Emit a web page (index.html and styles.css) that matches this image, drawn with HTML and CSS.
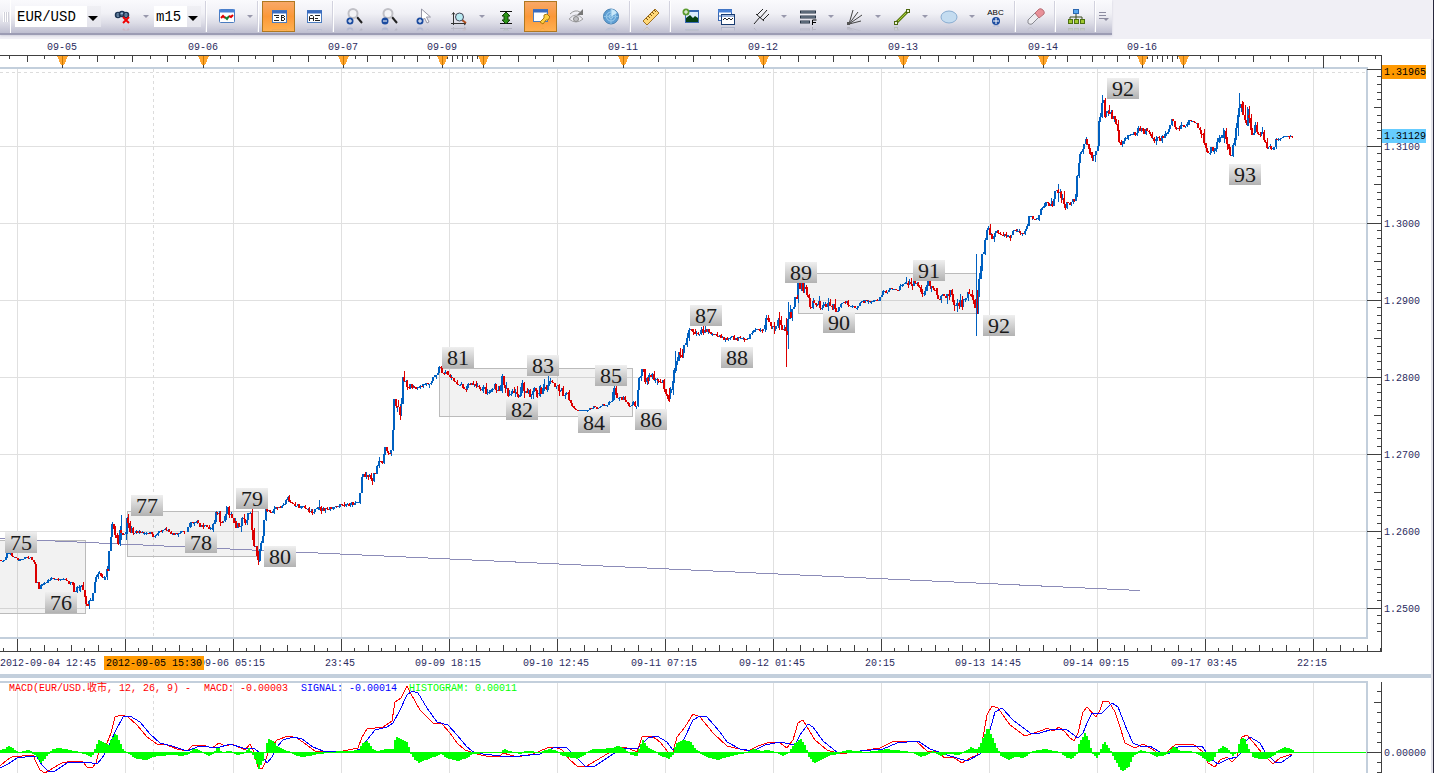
FILE: index.html
```
<!DOCTYPE html>
<html lang="en">
<head>
    <meta charset="UTF-8">
    <meta name="viewport" content="width=device-width, initial-scale=1.0">
    <title>EUR/USD m15</title>
    <link rel="stylesheet" href="styles.css">
</head>
<body>
    <div class="toolbar-row">
        <div class="toolbar">
            <span class="grip"></span>
            <span class="combo symbol">
                <select aria-label="Symbol"><option>EUR/USD</option><option>GBP/USD</option></select>
            </span>
            <button class="tool" aria-label="Unlink chart">
                <svg viewBox="0 0 18 18"><g fill="#9fbfdc" stroke="#1d3554" stroke-width="1.5"><circle cx="4" cy="7" r="2.500"/><circle cx="8" cy="6" r="2.500"/><circle cx="12" cy="7" r="2.500"/></g><path d="M2 7h12" stroke="#1d3554"/><path d="M9 9l6 6M15 9l-6 6" stroke="#f00000" stroke-width="2"/></svg>
            </button>
            <button class="drop" aria-label="Link options"></button>
            <span class="combo period">
                <select aria-label="Period"><option>m15</option><option>H1</option></select>
            </span>
            <span class="sep"></span>
            <button class="tool" aria-label="Chart type">
                <svg viewBox="0 0 18 18"><rect x="1.500" y="1.500" width="15" height="13" rx="1" fill="#fff" stroke="#4a7cc0"/><path d="M1 3h16" stroke="#4a82d6" stroke-width="3"/><path d="M3 10l2-2 2 2" fill="none" stroke="#e00000" stroke-width="2"/><path d="M7 9l2 2 2-3" fill="none" stroke="#108030" stroke-width="2"/><path d="M11 8l2 1 2-2" fill="none" stroke="#e00000" stroke-width="2"/></svg>
            </button>
            <button class="drop" aria-label="More chart types"></button>
            <span class="sep"></span>
            <button class="tool active" aria-label="Bid price">
                <svg viewBox="0 0 18 18"><rect x="2.500" y="2.500" width="14" height="12" fill="#fff" stroke="#4a7cc0"/><path d="M2 4h15" stroke="#3a6cc0" stroke-width="3"/><path d="M4 7.500h5M6 9.500h3M4 12.500h5M11.500 7v6M11 7.500h3M11 9.500h3M11 12.500h3M14.500 8v1M14.500 10v2" fill="none" stroke="#222"/></svg>
            </button>
            <button class="tool" aria-label="Ask price">
                <svg viewBox="0 0 18 18"><rect x="2.500" y="2.500" width="14" height="12" fill="#fff" stroke="#4a7cc0"/><path d="M2 4h15" stroke="#3a6cc0" stroke-width="3"/><path d="M4.500 13V8.500l1-1h2l1 1V13M5 10.500h4M10 7.500h5M10 10.500h3M10 12.500h5" fill="none" stroke="#222"/></svg>
            </button>
            <span class="sep"></span>
            <button class="tool" aria-label="Zoom in">
                <svg viewBox="0 0 18 18"><path d="M12 9l5 6" stroke="#222" stroke-width="2"/><circle cx="8" cy="5.500" r="4.500" fill="#f4f4f6" stroke="#c0c0c6" stroke-width="2"/><circle cx="5" cy="13" r="3.500" fill="#1c4ca0"/><path d="M3 13h4M5 11v4" stroke="#fff"/></svg>
            </button>
            <button class="tool" aria-label="Zoom out">
                <svg viewBox="0 0 18 18"><path d="M12 9l5 6" stroke="#222" stroke-width="2"/><circle cx="8" cy="5.500" r="4.500" fill="#f4f4f6" stroke="#c0c0c6" stroke-width="2"/><circle cx="5" cy="13" r="3.500" fill="#1c4ca0"/><path d="M3 13h4" stroke="#fff"/></svg>
            </button>
            <button class="tool" aria-label="Zoom to selection">
                <svg viewBox="0 0 18 18"><path d="M6.500 1v12l3-3 2.500 5 2-1-2.500-5h4z" fill="#fff" stroke="#9696a4"/><circle cx="5" cy="13" r="3.500" fill="#1c4ca0"/><path d="M3 13h4M5 11v4" stroke="#fff"/></svg>
            </button>
            <button class="tool" aria-label="Fit price axis">
                <svg viewBox="0 0 18 18"><path d="M3.500 5v12M1 15.500h15M2 6.500l1.500-2 1.500 2M14 14l2 1.500-2 1.500" fill="none" stroke="#333"/><path d="M12 12l4 3" stroke="#b05020" stroke-width="2"/><circle cx="9.500" cy="9" r="4" fill="#b8eaf2" stroke="#445"/></svg>
            </button>
            <button class="drop" aria-label="Fit options"></button>
            <button class="tool" aria-label="Fit vertically">
                <svg viewBox="0 0 18 18"><path d="M3 3.500h12M3 15.500h12" stroke="#111"/><path d="M9 4l4 4h-2v4h2l-4 4-4-4h2V8H5z" fill="#2c9418" stroke="#124008"/></svg>
            </button>
            <button class="tool active" aria-label="Chart options">
                <svg viewBox="0 0 18 18"><rect x="1.500" y="1.500" width="14" height="12" fill="#fff" stroke="#4a7cc0"/><path d="M1 3h15" stroke="#3a6cc0" stroke-width="3"/><path d="M8 14l4-4V7l3-1 3 3-2 3h-2l-3 4z" fill="#ffcf40" stroke="#a87810"/></svg>
            </button>
            <button class="tool" aria-label="Refresh view">
                <svg viewBox="0 0 18 18"><path d="M2 11q7-8 14 0q-7 6-14 0z" fill="#ececf0" stroke="#a0a0a4"/><circle cx="9" cy="11" r="2.500" fill="#c0c0c4" stroke="#888"/><path d="M3 6q5-5 10-2" fill="none" stroke="#999"/><path d="M16 1v6h-6z" fill="#777"/></svg>
            </button>
            <button class="tool" aria-label="Market radar">
                <svg viewBox="0 0 18 18"><circle cx="9" cy="8.500" r="7.500" fill="#5f9fd4" stroke="#4880b0"/><circle cx="9" cy="8.500" r="4.500" fill="none" stroke="#a8d4f0"/><circle cx="9" cy="8.500" r="2" fill="none" stroke="#a8d4f0"/><path d="M9 8.500V1a7.500 7.500 0 0 1 6 4z" fill="#c8e8fa"/><path d="M2 8.500h14M9 1v15" stroke="#8cc0e4"/></svg>
            </button>
            <span class="sep"></span>
            <button class="tool" aria-label="Ruler">
                <svg viewBox="0 0 18 18"><path d="M1 13L13 1l4 4L5 17z" fill="#ffd878" stroke="#a07020"/><path d="M4 10l2 2M6 8l2 2M8 6l2 2M10 4l2 2M12 2l2 2" stroke="#7c5410"/></svg>
            </button>
            <span class="sep"></span>
            <button class="tool" aria-label="Add indicator">
                <svg viewBox="0 0 18 18"><rect x="3.500" y="2.500" width="13" height="12" fill="#dcecff" stroke="#3868b4"/><path d="M3 3h14" stroke="#3868b4" stroke-width="2"/><path d="M4 14v-4l4-3 3 3 2-2 3 2v4z" fill="#064014"/><circle cx="4" cy="4" r="3.500" fill="#5c9c30"/><path d="M2 4h4M4 2v4" stroke="#fff"/></svg>
            </button>
            <button class="tool" aria-label="Indicator windows">
                <svg viewBox="0 0 18 18"><rect x="1.500" y="1.500" width="13" height="11" fill="#fff" stroke="#3868b4"/><path d="M1 3h14" stroke="#4a82d6" stroke-width="3"/><rect x="4.500" y="6.500" width="13" height="10" fill="#fff" stroke="#183c70"/><path d="M1 8h16" stroke="#3868b4"/><path d="M6 12l2-2 2 2 2-2 2 2 2-2" fill="none" stroke="#222"/></svg>
            </button>
            <button class="tool" aria-label="Pitchfork">
                <svg viewBox="0 0 18 18"><path d="M2 16L8 9M4 6l8 7M5 7l6-6M8 10l7-8M11 12l6-6" fill="none" stroke="#222"/></svg>
            </button>
            <button class="drop" aria-label="More pitchforks"></button>
            <button class="tool" aria-label="Fibonacci">
                <svg viewBox="0 0 18 18"><path d="M1 4h16M1 9h16M1 14h10" stroke="#283444" stroke-width="3"/><path d="M2 4h14M2 9h14M2 14h8" stroke="#8c9cac"/><path d="M13.500 17v-5h4M13 14.500h4" fill="none" stroke="#000"/></svg>
            </button>
            <button class="drop" aria-label="More levels"></button>
            <button class="tool" aria-label="Fan lines">
                <svg viewBox="0 0 18 18"><path d="M3 16L7 2M3 16l9-12M3 16l13-9M3 16l12-3" stroke="#444"/><rect x="1" y="14" width="3" height="3" fill="#555"/></svg>
            </button>
            <button class="drop" aria-label="More fans"></button>
            <button class="tool" aria-label="Line">
                <svg viewBox="0 0 18 18"><path d="M3 15L15 3" stroke="#5c7c10" stroke-width="3"/><path d="M3 15L15 3" stroke="#a8d038"/><rect x="1.500" y="13.500" width="3" height="3" fill="#eef4d8" stroke="#4c6810"/><rect x="13.500" y="1.500" width="3" height="3" fill="#eef4d8" stroke="#4c6810"/></svg>
            </button>
            <button class="drop" aria-label="More lines"></button>
            <button class="tool" aria-label="Ellipse">
                <svg viewBox="0 0 18 18"><ellipse cx="9" cy="9" rx="8" ry="6" fill="#c4dcf0" stroke="#88acd0"/></svg>
            </button>
            <button class="drop" aria-label="More shapes"></button>
            <button class="tool caption" aria-label="Text label">
                <span>ABC</span>
                <svg viewBox="0 0 8 8"><circle cx="4" cy="4" r="4" fill="#1c4ca0"/><path d="M1 4h6M4 1v6" stroke="#fff"/></svg>
            </button>
            <span class="sep"></span>
            <button class="tool" aria-label="Eraser">
                <svg viewBox="0 0 18 18"><path d="M1 12l7-7 4 4-7 7q-2 1-4-1z" fill="#ececf0" stroke="#888890"/><path d="M8 5l4-4q2-1 4 1t1 4l-5 4z" fill="#e89098" stroke="#b87078"/></svg>
            </button>
            <span class="sep"></span>
            <button class="tool" aria-label="Object tree">
                <svg viewBox="0 0 18 18"><path d="M9 6v6M3 12V9h12v3" fill="none" stroke="#3c4c20"/><rect x="6.500" y="1.500" width="5" height="4" fill="#58a8f0" stroke="#2c68b0"/><g fill="#a0c830" stroke="#4c7010"><rect x="1.500" y="11.500" width="4" height="4"/><rect x="7.500" y="11.500" width="4" height="4"/><rect x="13.500" y="11.500" width="4" height="4"/></g></svg>
            </button>
            <span class="sep"></span>
            <button class="overflow" aria-label="Toolbar options">
                <svg viewBox="0 0 10 10"><path d="M0 .5h7M0 3.500h7M0 6.500h5" stroke="#8c8ca0"/><path d="M4 6h6l-3 3z" fill="#8c8ca0"/></svg>
            </button>
        </div>
    </div>

    <main class="workspace">
        <svg id="price" class="chart" viewBox="0 39 1431 635" role="img" aria-label="EUR/USD 15 minute price chart">
            <defs>
                <linearGradient id="tagFill" x1="0" y1="0" x2="0" y2="1">
                    <stop offset="0" stop-color="#efefef"/>
                    <stop offset="1" stop-color="#b2b2b2"/>
                </linearGradient>
            </defs>
        </svg>
        <div class="splitter"></div>
        <svg id="macd" class="chart" viewBox="0 678 1431 95" role="img" aria-label="MACD indicator"></svg>
    </main>

    <script src="chart.js"></script>
</body>
</html>
```
FILE: styles.css
```
* {
    margin: 0;
    padding: 0;
    box-sizing: border-box;
}

body {
    background-color: #fff;
    border-right: 1px solid #28283c;
    min-height: 100vh;
    overflow: hidden;
    font-family: "Liberation Mono", "Noto Sans CJK SC", monospace;
}

/* toolbar */
.toolbar-row {
    display: flex;
    background-color: #f0eff5;
    padding-bottom: 4px;
}

.toolbar {
    display: flex;
    align-items: center;
    gap: 2px;
    height: 35px;
    padding: 0 3px;
    background: linear-gradient(#fafafd, #f1f1f6 40%, #dcdce6 70%, #bebed0);
    border-bottom: 2px solid #9c9cb4;
    box-shadow: 0 1px 2px #d0d0dc;
}

.grip {
    width: 8px;
    height: 33px;
    margin-right: 2px;
    border-right: 1px solid #fff;
    background: repeating-linear-gradient(90deg, #fff 0 1px, #d0d0da 1px 2px) no-repeat 0 center / 6px 10px;
}

.combo {
    position: relative;
    height: 21px;
}

.combo select {
    appearance: none;
    width: 100%;
    height: 21px;
    padding-left: 2px;
    border: none;
    border-radius: 0;
    background: linear-gradient(#f0f0f4, #e4e4ec) no-repeat right / 14px 100% #fff;
    color: #000;
    font-family: inherit;
    font-size: 14px;
}

.combo::after {
    content: "";
    position: absolute;
    right: 3px;
    top: 10px;
    border: 5px solid transparent;
    border-top-color: #000;
    border-bottom: none;
    pointer-events: none;
}

.symbol {
    width: 86px;
    margin-right: 3px;
}

.period {
    width: 47px;
    margin: 0 2px 0 1px;
}

.sep {
    width: 1px;
    height: 31px;
    margin: 0 1px;
    background-color: #fff;
    box-shadow: -1px 0 #d2d2de;
}

.tool,
.drop,
.overflow {
    border: none;
    background: none;
    cursor: pointer;
}

.tool {
    display: flex;
    flex: none;
    align-items: center;
    justify-content: center;
    width: 33px;
    height: 31px;
}

.tool svg {
    width: 18px;
    height: 18px;
    -webkit-box-reflect: below 0 linear-gradient(transparent 70%, rgba(0, 0, 0, 0.25));
}

.tool.active {
    border: 1px solid #b07820;
    background: linear-gradient(#f8a868, #fb9838 50%, #ffb050);
}

.tool.caption {
    flex-direction: column;
    font-family: "Liberation Sans", sans-serif;
    font-size: 8px;
    line-height: 8px;
}

.tool.caption svg {
    width: 8px;
    height: 8px;
}

.drop {
    width: 10px;
    height: 31px;
}

.drop::before {
    content: "";
    display: block;
    width: 0;
    margin: 0 auto;
    border: 3px solid transparent;
    border-top-color: #9898ac;
    border-bottom: none;
}

.overflow {
    display: flex;
    align-items: center;
    width: 10px;
    height: 31px;
}

.overflow svg {
    width: 10px;
    height: 10px;
}

/* charts */
.workspace {
    border-right: 2px solid #e2e2ea;
}

.chart {
    display: block;
    width: 100%;
    height: auto;
    shape-rendering: crispEdges;
}

.splitter {
    height: 4px;
    background-color: #c3cfdc;
}

.grid { stroke: #e0e0e0; }
.cross { stroke: #dcdcdc; stroke-dasharray: 3 3; }
.frame { fill: none; stroke: #c3cfdc; stroke-width: 2; }
.axis { fill: none; stroke: #404040; }
.session { fill: #ffa52e; }
.session-stem { stroke: #cc7a00; }
.zone { fill: rgba(0, 0, 0, 0.05); stroke: #bbb; }
.trend { stroke: #8c8cb8; }
.up { stroke: #0060c0; }
.down { stroke: #dc0000; }
.up, .down { fill: none; }
.body { stroke-width: 2; }
.wave { fill: url(#tagFill); }
.wave-text { font: 22px "Liberation Serif", serif; fill: #1a1a1a; text-anchor: middle; }
.axis-text { font-size: 10px; fill: #2c2c60; }
.mid { text-anchor: middle; }
.orange { fill: #ff9900; }
.blue { fill: #66ccff; }
.tag-text { font-size: 10px; fill: #000; }
.hist { fill: #00ff00; }
.zero { stroke: #00ff00; }
.macd-line { fill: none; stroke: #ff0000; }
.signal-line { fill: none; stroke: #0000ff; }
.legend { font-size: 10px; }
.legend-macd { fill: #ff0000; }
.legend-signal { fill: #0000ff; }
.legend-hist { fill: #00ff00; }
```
FILE: chart.js
```
const NS = 'http://www.w3.org/2000/svg';
const price = document.getElementById('price');
const macd = document.getElementById('macd');

function add(svg, tag, cls, attrs, text) {
    const el = document.createElementNS(NS, tag);
    el.setAttribute('class', cls);
    for (const key in attrs) el.setAttribute(key, attrs[key]);
    if (text) el.textContent = text;
    svg.appendChild(el);
}

function toPoints(str) {
    return str.trim().split(/\s+/).map(p => p.split(',').map(Number));
}

// linear interpolation between the known points
function valueAt(points, x) {
    for (let i = 1; i < points.length; i++) {
        if (x <= points[i][0]) {
            const [x0, y0] = points[i - 1];
            const [x1, y1] = points[i];
            return x1 === x0 ? y1 : y0 + (y1 - y0) * (x - x0) / (x1 - x0);
        }
    }
    return points[points.length - 1][1];
}

const GRID = 108;      // one vertical grid line = 74 bars
const BAR = GRID / 74;
const TICK = 77;       // one horizontal grid line = 0.0100

const closes = toPoints(`
0,561 4,561 7,553 10,553 12,556 15,558 18,561 22,559 26,557 30,558 33,560 35,563 36,582 38,583 39,589 41,585 45,583
48,580 51,578 54,579 60,580 66,580 69,584 72,582 73,588 75,590 79,586 81,584 83,589 84,587 85,600 87,605 90,602 93,595
95,580 97,573 99,572 101,576 103,577 104,581 106,570 108,569 109,552 110,546 111,532 113,527 115,533 117,537 119,541
120,531 122,536 124,538 126,527 127,522 129,529 131,528 133,532 140,532 145,534 150,533 154,537 156,534 160,531
165,529 169,531 173,534 178,533 183,532 187,532 188,527 190,521 192,522 194,524 196,522 199,525 203,526 207,528
211,528 214,521 216,512 218,513 220,517 221,527 224,520 226,512 227,509 230,515 233,522 235,524 239,524 243,520
246,520 249,512 251,515 252,520 253,540 256,552 258,558 260,547 262,541 264,522 265,508 268,510 271,512 275,509
280,507 285,502 288,498 290,500 293,504 297,505 300,508 305,506 309,510 313,511 318,509 325,510 330,509 340,506
350,504 356,502 360,502 361,483 363,470 365,477 368,475 372,479 375,472 378,465 382,462 385,450 389,452 392,448
393,420 394,400 397,405 400,413 402,395 403,377 407,382 409,389 412,386 415,389 420,388 423,385 430,382 433,379
437,372 440,367 443,373 448,374 453,380 457,383 462,385 465,389 469,384 475,385 478,389 483,387 487,392 490,391
495,387 498,393 502,379 505,385 508,393 512,395 518,395 522,387 527,393 531,396 533,387 537,394 540,392 545,389
548,383 553,382 557,388 562,390 563,395 567,393 570,403 575,410 585,411 593,407 598,408 602,404 607,405 612,400
614,387 616,395 622,398 625,399 629,405 633,403 636,407 638,387 640,377 642,368 645,382 648,377 652,375 655,382
660,383 663,382 666,392 668,397 671,390 674,372 676,360 680,352 683,355 685,345 689,328 692,332 697,332 702,330
705,332 708,328 712,335 720,337 723,339 732,338 740,339 747,341 752,332 757,328 762,332 766,320 770,324 775,325
779,322 782,333 785,328 787,335 789,305 791,315 793,310 797,295 798,283 803,287 807,293 810,307 813,300 818,303
823,307 827,305 829,300 832,308 837,311 842,304 846,301 850,307 857,307 860,303 867,301 873,302 879,299 883,292
887,292 890,288 897,291 902,286 907,282 912,283 915,283 918,290 925,292 928,283 933,287 938,297 945,296 952,293
955,303 959,307 963,300 968,295 972,296 975,308 977,307 978,293 981,260 983,253 986,230 988,227 990,233 993,240
995,233 1000,233 1005,236 1010,237 1013,229 1018,231 1023,234 1027,228 1029,217 1037,219 1042,207 1046,202
1053,207 1054,195 1057,192 1059,188 1062,197 1066,205 1072,200 1075,203 1076,187 1078,163 1082,153 1085,137
1088,143 1092,160 1095,153 1098,143 1099,122 1101,110 1103,100 1105,117 1108,112 1112,116 1116,120 1119,137
1122,145 1125,140 1130,135 1137,132 1142,127 1144,132 1148,130 1152,138 1160,139 1165,135 1168,130 1172,120
1177,128 1185,127 1190,122 1197,123 1200,132 1203,138 1207,150 1215,148 1218,138 1223,133 1227,140 1231,157
1233,145 1237,125 1239,103 1242,113 1245,117 1247,120 1248,115 1251,133 1255,128 1258,134 1263,133 1266,148
1270,145 1273,150 1276,140 1283,137 1293,136`);

// bar height per stretch: last x, size
const ranges = [
    [70, 2], [110, 5], [130, 9], [188, 3], [225, 5], [264, 8], [360, 4], [395, 6], [412, 8], [475, 4],
    [500, 6], [545, 9], [570, 6], [612, 2], [640, 5], [690, 8], [712, 6], [765, 4], [797, 8], [835, 10],
    [905, 3], [950, 8], [990, 9], [1050, 4], [1070, 8], [1128, 8], [1200, 5], [1220, 8], [1260, 10], [1276, 6], [1300, 3]
];

// long wicks: x, high, low, direction
const spikes = [
    [121, 515, 540, 'up'], [128, 514, 528, 'down'], [226, 506, 520, 'up'], [252, 509, 540, 'down'],
    [259, 550, 562, 'up'], [319, 500, 510, 'up'], [502, 376, 388, 'up'], [548, 370, 390, 'up'],
    [614, 385, 400, 'up'], [669, 388, 402, 'down'], [675, 351, 373, 'up'], [766, 315, 330, 'up'],
    [779, 312, 330, 'down'], [786, 318, 367, 'down'], [788, 302, 349, 'up'], [976, 254, 336, 'up'],
    [977, 290, 314, 'down'], [1058, 184, 202, 'up'], [1102, 95, 115, 'up'], [1239, 93, 110, 'up'],
    [1245, 105, 123, 'down'], [1247, 107, 126, 'up']
];

const waves = [
    [75, 5, 532], [76, 45, 592], [77, 131, 495], [78, 185, 532], [79, 236, 488], [80, 264, 546], [81, 442, 347],
    [82, 506, 399], [83, 527, 355], [84, 578, 412], [85, 595, 365], [86, 635, 409], [87, 690, 305], [88, 721, 347],
    [89, 785, 262], [90, 823, 312], [91, 913, 260], [92, 983, 315], [92, 1107, 78], [93, 1229, 164]
];

const zones = [[-5, 540, 90, 73], [127, 511, 131, 45], [439, 368, 193, 48], [798, 273, 178, 40]];

const days = [
    [62, '09-05'], [203, '09-06'], [343, '09-07'], [442, '09-09'], [483, ''], [623, '09-11'],
    [763, '09-12'], [903, '09-13'], [1043, '09-14'], [1142, '09-16'], [1183, '']
];

const times = ['', '', '09-06 05:15', '23:45', '09-09 18:15', '09-10 12:45', '09-11 07:15', '09-12 01:45',
    '20:15', '09-13 14:45', '09-14 09:15', '09-17 03:45', '22:15'];

function drawPrice() {
    // grid
    let d = '';
    for (let x = 17; x < 1366; x += GRID) d += `M${x + 0.5} 69V638`;
    for (let y = 146; y < 638; y += TICK) d += `M0 ${y + 0.5}H1366`;
    add(price, 'path', 'grid', { d });
    add(price, 'path', 'cross', { d: 'M0 72.5H1366M153.5 69V638' });
    add(price, 'path', 'frame', { d: 'M0 68H1367V638H0' });

    // top axis: eight steps between day marks
    d = 'M0 55.5H1381.5V651.5H0';
    const marks = [-78, ...days.map(day => day[0]), 1323, 1463];
    for (let i = 1; i < marks.length; i++) {
        for (let k = 1; k < 8; k++) {
            const x = Math.floor(marks[i - 1] + (marks[i] - marks[i - 1]) * k / 8);
            if (x > 0 && x < 1381) d += `M${x + 0.5} 56v${k % 2 ? 3 : 6}`;
        }
    }
    d += 'M1323.5 56v12';

    // bottom axis
    for (let i = 0; i * 13.5 + 3.5 < 1381; i++) {
        const x = Math.floor(3.5 + i * 13.5);
        const len = i % 8 === 1 ? 12 : i % 2 ? 6 : 3;
        d += `M${x + 0.5} 651v${-len}`;
    }

    // price axis
    for (let i = 0; i < 74; i++) {
        const y = Math.floor(69 + i * TICK / 10);
        d += `M1381 ${y + 0.5}h${i % 10 === 0 ? -14 : i % 5 === 0 ? -7 : -4}`;
    }
    add(price, 'path', 'axis', { d });

    for (const [x, label] of days) {
        add(price, 'path', 'session', { d: `M${x - 5} 56h11l-4 9h-3z` });
        add(price, 'path', 'session-stem', { d: `M${x + 0.5} 56v10` });
        add(price, 'path', 'axis', { d: `M${x + 0.5} 65v3` });
        if (label) add(price, 'text', 'axis-text mid', { x: x, y: 50 }, label);
    }

    for (const [x, y, width, height] of zones) {
        add(price, 'rect', 'zone', { x: x + 0.5, y: y + 0.5, width, height });
    }
    add(price, 'path', 'trend', { d: 'M0 538.5L1140 590.5' });

    // bars
    const paths = { up: '', down: '' };
    const wicks = { up: '', down: '' };
    let seed = 7;
    const random = () => (seed = seed * 16807 % 2147483647) / 2147483647;
    let open = closes[0][1];
    for (let x = 0; x <= 1293; x += BAR) {
        const size = ranges.find(r => x <= r[0])[1];
        const close = Math.round(valueAt(closes, x) + (random() - 0.5) * size);
        const dir = close <= open ? 'up' : 'down';
        const top = Math.min(open, close);
        const bottom = Math.max(open, close, top + 1);
        const px = Math.round(x);
        const wick = () => Math.floor(random() * random() * size);
        paths[dir] += `M${px} ${top}V${bottom}`;
        wicks[dir] += `M${px + 0.5} ${top - wick()}V${bottom + wick()}`;
        open = close;
    }
    for (const [x, high, low, dir] of spikes) wicks[dir] += `M${x + 0.5} ${high}V${low}`;
    for (const dir of ['up', 'down']) {
        add(price, 'path', dir, { d: wicks[dir] });
        add(price, 'path', dir + ' body', { d: paths[dir] });
    }

    for (const [n, x, y] of waves) {
        add(price, 'rect', 'wave', { x, y, width: 32, height: 21 });
        add(price, 'text', 'wave-text', { x: x + 16, y: y + 18 }, String(n));
    }

    // labels
    for (let i = 0; i < 7; i++) {
        add(price, 'text', 'axis-text', { x: 1384, y: 150 + i * TICK }, (1.31 - i * 0.01).toFixed(4));
    }
    add(price, 'rect', 'orange', { x: 1382, y: 65, width: 44, height: 14 });
    add(price, 'text', 'tag-text', { x: 1384, y: 75 }, '1.31965');
    add(price, 'rect', 'blue', { x: 1382, y: 129, width: 44, height: 14 });
    add(price, 'text', 'tag-text', { x: 1384, y: 139 }, '1.31129');

    add(price, 'text', 'axis-text', { x: 0, y: 666 }, '2012-09-04 12:45');
    times.forEach((label, i) => {
        if (label) add(price, 'text', 'axis-text mid', { x: 16 + i * GRID, y: 666 }, label);
    });
    add(price, 'rect', 'orange', { x: 104, y: 656, width: 100, height: 14 });
    add(price, 'text', 'tag-text', { x: 106, y: 666 }, '2012-09-05 15:30');
}

const macdLine = `
0,766 7,760 12,757 33,755 36,762 40,770 45,773 53,768 62,763 72,761 83,762 87,767 92,768 96,763 100,748 107,743
111,733 115,717 121,715 128,717 137,725 147,737 157,744 167,745 177,749 187,751 193,745 203,745 212,748 219,743
225,746 232,744 245,750 250,744 254,752 258,767 262,769 265,763 268,752 277,740 288,736 297,738 307,745 315,751
343,751 358,748 362,737 367,729 383,727 392,721 395,702 401,698 407,686 410,692 420,710 433,723 442,724 450,733
457,743 465,750 477,754 490,757 500,756 503,753 517,757 533,754 547,748 555,747 562,750 570,760 577,766 585,767
597,760 607,754 617,747 625,747 637,752 642,737 652,736 660,742 668,752 673,752 677,737 685,727 693,714 700,717
713,733 727,746 748,751 758,746 770,742 780,743 787,748 793,740 798,723 803,720 810,732 815,740 827,750 840,754
860,751 880,748 892,742 908,741 917,742 927,751 937,752 945,758 953,757 962,763 970,758 977,755 982,743 987,715
992,706 998,708 1010,725 1025,736 1043,730 1047,728 1053,731 1059,727 1065,732 1070,738 1074,741 1078,733 1083,712
1087,707 1096,717 1100,710 1103,701 1109,702 1115,712 1120,727 1125,743 1135,748 1143,744 1152,749 1162,756
1175,745 1193,744 1203,752 1208,763 1215,767 1220,760 1227,757 1232,762 1237,757 1242,737 1247,735 1253,742
1262,753 1273,764 1280,758 1292,754`;

const signalLine = `
0,768 8,764 17,758 33,756 37,757 42,765 48,771 55,771 67,763 87,762 97,764 102,758 107,750 115,732 123,717 130,716
140,722 150,734 160,743 172,746 187,751 200,746 217,748 230,744 243,748 255,749 260,753 267,763 272,757 277,747
283,740 293,737 302,739 313,747 323,751 355,751 360,749 367,740 375,730 387,727 393,723 400,710 407,695 412,691
418,693 427,708 437,722 448,725 457,735 467,747 475,753 500,756 520,756 540,754 555,747 567,748 577,758 585,766
595,766 607,758 622,748 637,749 648,738 657,736 667,742 673,750 680,747 685,737 693,720 700,716 707,717 720,732
727,742 740,749 753,751 765,745 780,742 795,745 800,735 808,724 813,727 823,741 838,753 860,751 883,749 897,743
918,741 930,749 947,755 967,761 980,754 990,730 995,712 1002,708 1013,720 1030,733 1037,734 1053,729 1067,730
1078,738 1083,733 1087,723 1092,713 1102,713 1112,703 1118,707 1127,730 1133,743 1140,746 1150,746 1163,754
1170,753 1178,747 1202,746 1210,758 1218,764 1228,759 1237,757 1242,752 1245,742 1250,737 1260,743 1265,752
1275,762 1282,762 1292,755`;

const histogram = toPoints(`
0,2 4,3 7,6 11,5 15,1 20,0 28,2 35,-3 40,-10 43,-7 48,-1 52,3 57,4 65,3 72,1 80,0 86,-2 90,-4 93,-1 95,6 98,12 104,9
108,7 111,14 115,19 118,12 122,3 125,0 131,-3 136,-6 145,-7 152,-4 160,-3 170,-2 182,-3 188,-1 192,3 197,3 204,-1
209,-3 213,0 217,5 221,0 230,1 237,-2 243,-1 248,4 251,0 255,-8 258,-16 262,-8 265,4 267,14 272,11 276,6 283,2 290,0
296,-3 301,-4 308,-3 318,-1 330,0 340,1 350,1 358,2 362,9 367,11 372,3 376,1 385,3 392,3 395,16 401,12 407,9 409,1
413,-6 418,-10 425,-7 433,-4 440,-1 446,-5 457,-8 466,-5 472,-1 485,0 500,0 503,3 508,1 520,-1 525,1 540,0 548,3
555,2 560,-2 567,-4 577,-6 585,-1 592,3 600,3 612,4 617,6 625,2 630,-2 636,-3 638,3 642,12 647,5 652,2 660,-3
668,-6 672,-2 675,8 682,12 690,10 695,3 701,-2 708,-5 717,-7 727,-4 735,-2 745,0 752,3 760,1 768,2 775,0 783,-3
788,0 793,8 800,13 805,5 808,-4 813,-10 820,-7 827,-3 838,-1 846,2 855,1 865,0 875,1 885,3 893,2 903,1 912,0
920,-4 927,-2 933,1 940,-3 948,-1 958,-2 965,1 970,5 975,2 979,6 983,16 987,25 992,14 996,4 1000,-3 1007,-7
1015,-4 1023,-5 1030,0 1038,2 1045,3 1052,1 1060,0 1066,-5 1071,-6 1076,-1 1078,8 1084,19 1088,12 1091,0 1096,-5
1099,0 1103,11 1108,4 1112,-3 1117,-12 1121,-19 1128,-14 1132,-4 1140,2 1147,0 1155,-4 1165,-2 1173,6 1179,1
1190,1 1198,-2 1208,-9 1213,-6 1217,2 1222,6 1227,3 1232,-3 1236,0 1239,12 1243,15 1247,5 1252,-4 1258,-6 1267,-6
1273,-3 1276,1 1284,5 1291,3 1293,0`);

function drawMacd() {
    let d = '';
    for (let x = 17; x < 1366; x += GRID) d += `M${x + 0.5} 683V773`;
    add(macd, 'path', 'grid', { d });
    add(macd, 'path', 'cross', { d: 'M153.5 683V773' });
    add(macd, 'path', 'frame', { d: 'M0 682H1367V773' });

    d = 'M1381.5 682V773';
    for (let i = -2; i < 7; i++) {
        const y = Math.round(752 - i * 10.1);
        d += `M1381 ${y + 0.5}h${i === 0 ? -14 : i === 5 ? -7 : -4}`;
    }
    add(macd, 'path', 'axis', { d });

    add(macd, 'text', 'legend legend-macd', { x: 9, y: 691 }, 'MACD(EUR/USD.收市, 12, 26, 9) -');
    add(macd, 'text', 'legend legend-macd', { x: 204, y: 691 }, 'MACD: -0.00003');
    add(macd, 'text', 'legend legend-signal', { x: 301, y: 691 }, 'SIGNAL: -0.00014');
    add(macd, 'text', 'legend legend-hist', { x: 409, y: 691 }, 'HISTOGRAM: 0.00011');

    add(macd, 'polyline', 'macd-line', { points: macdLine.trim() });
    add(macd, 'polyline', 'signal-line', { points: signalLine.trim() });

    d = '';
    for (let x = 0; x < 1293; x += 2) {
        const v = Math.round(valueAt(histogram, x));
        const top = v > 0 ? 752 - v : 752;
        d += `M${x} ${top}h2V${Math.max(753, 753 - v)}h-2z`;
    }
    add(macd, 'path', 'hist', { d });
    add(macd, 'path', 'zero', { d: 'M0 752.5H1366' });
    add(macd, 'text', 'axis-text', { x: 1384, y: 756 }, '0.00000');
}

drawPrice();
drawMacd();
```
